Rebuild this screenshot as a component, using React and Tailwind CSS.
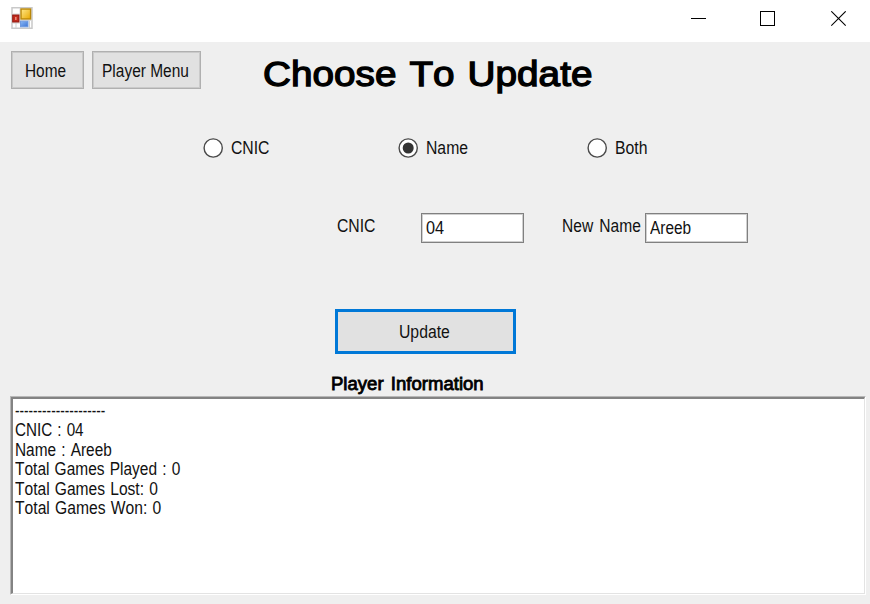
import React from 'react';

function Label({ className = '', children }) {
  return (
    <span className={`block origin-left whitespace-pre leading-5 ${className}`}>{children}</span>
  );
}

function FormIcon() {
  return (
    <svg width="22" height="22" viewBox="0 0 22 22" className="shrink-0">
      <defs>
        <linearGradient id="gold" x1="0" y1="0" x2="1" y2="1">
          <stop offset="0" stopColor="#ffe88a" />
          <stop offset="1" stopColor="#e9a800" />
        </linearGradient>
        <linearGradient id="blue" x1="0" y1="0" x2="1" y2="1">
          <stop offset="0" stopColor="#8ab8f5" />
          <stop offset="1" stopColor="#3c74d6" />
        </linearGradient>
      </defs>
      <rect x="1" y="0.75" width="20" height="20.5" fill="#fff" stroke="#c9c9c9" strokeWidth="1.5" />
      <path d="M1 16H9M5 16V21M18.5 14V21" stroke="#cfcfcf" fill="none" />
      <path d="M1 7H9M9 1V13.5H21" stroke="#d8d8d8" fill="none" />
      <rect x="1.7" y="8" width="6.3" height="7" fill="#c22a1c" stroke="#8f1a12" />
      <rect x="4" y="10" width="1.6" height="3" fill="#e88878" />
      <rect x="10" y="2" width="9.6" height="10" fill="url(#gold)" stroke="#b98708" strokeWidth="1.4" />
      <rect x="9.5" y="14.2" width="7.5" height="5.6" fill="url(#blue)" stroke="#6f9ae0" />
    </svg>
  );
}

function TitleBar() {
  return (
    <div className="flex h-[42px] shrink-0 bg-white pl-[11px]">
      <div className="pt-[7px]"><FormIcon /></div>
      <div className="ml-auto flex pr-[23px] pt-[11px]">
        <svg width="16" height="16" className="mr-[53px]" shapeRendering="crispEdges"><path d="M0 7.5H15" stroke="#000" /></svg>
        <svg width="16" height="16" className="mr-[55px]" shapeRendering="crispEdges"><rect x="0.5" y="0.5" width="14" height="14" fill="none" stroke="#000" /></svg>
        <svg width="16" height="16"><path d="M0.3 0.3L14.7 14.7M14.7 0.3L0.3 14.7" stroke="#000" strokeWidth="1.1" /></svg>
      </div>
    </div>
  );
}

function Radio({ checked, className, children }) {
  return (
    <div className={`flex items-center gap-2 ${className}`}>
      <svg width="20" height="20" viewBox="0 0 20 20" className="shrink-0">
        <circle cx="10.2" cy="10" r="9.1" fill="#fff" stroke="#4a4a4a" strokeWidth="1.4" />
        {checked && <circle cx="10.2" cy="10" r="5.5" fill="#333" />}
      </svg>
      <Label className="scale-x-[.9]">{children}</Label>
    </div>
  );
}

const info = [
  ['--------------------', 'scale-x-[.775]'],
  ['CNIC : 04', 'scale-x-[.87] [word-spacing:1px]'],
  ['Name : Areeb', 'scale-x-[.88] [word-spacing:1px]'],
  ['Total Games Played : 0', 'scale-x-[.885] [word-spacing:1px]'],
  ['Total Games Lost: 0', 'scale-x-[.89] [word-spacing:1px]'],
  ['Total Games Won: 0', 'scale-x-[.895] [word-spacing:1px]'],
];

export default function App() {
  return (
    <div className="flex h-[604px] w-[870px] flex-col overflow-hidden bg-[#efefef] font-['Liberation_Sans',Arial,sans-serif] text-[17.5px] text-[#111] [font-kerning:none]">
      <TitleBar />
      <div className="flex h-[95px] shrink-0 pl-[11px] pt-[9px]">
        <button className="h-[38px] w-[73px] border border-[#b0b0b0] bg-[#e1e1e1] pl-[13px] text-left shadow-[inset_0_0_0_1px_#cacaca]">
          <Label className="scale-x-[.88] pt-px">Home</Label>
        </button>
        <button className="ml-2 h-[38px] w-[109px] border border-[#b0b0b0] bg-[#e1e1e1] pl-[9px] text-left shadow-[inset_0_0_0_1px_#cacaca]">
          <Label className="w-[92px] scale-x-[.885] pt-px">Player Menu</Label>
        </button>
        <h1 className="ml-[62px] h-[46px] w-[340px] origin-left scale-x-[1.122] whitespace-nowrap text-[34.5px] font-normal leading-[46px] text-black [-webkit-text-stroke:1.3px_#000] [word-spacing:2px]">Choose To Update</h1>
      </div>
      <div className="flex h-[76px] shrink-0 pl-[203px]">
        <Radio className="h-[22px] w-[195px]">CNIC</Radio>
        <Radio className="h-[22px] w-[189px]" checked>Name</Radio>
        <Radio className="h-[22px]">Both</Radio>
      </div>
      <div className="flex h-[96px] shrink-0 pl-[337px]">
        <div className="w-[84px] pt-[3px]"><Label className="scale-x-[.9]">CNIC</Label></div>
        <div className="h-[30px] w-[103px] border border-[#808080] bg-white pl-1 pt-[4px] shadow-[inset_0_0_0_1px_#d0d0d0]">
          <Label className="scale-x-[.93]">04</Label>
        </div>
        <div className="ml-[38px] w-[83px] pt-[3px]"><Label className="scale-x-[.89] [word-spacing:2px]">New Name</Label></div>
        <div className="h-[30px] w-[103px] border border-[#808080] bg-white pl-[4px] pt-[4px] shadow-[inset_0_0_0_1px_#d0d0d0]">
          <Label className="scale-x-[.88]">Areeb</Label>
        </div>
      </div>
      <div className="flex h-[65px] shrink-0 pl-[335px]">
        <button className="h-[45px] w-[181px] border-[3px] border-[#0078d7] bg-[#e1e1e1] pl-[61px] text-left">
          <Label className="scale-x-[.9]">Update</Label>
        </button>
      </div>
      <div className="h-[22px] shrink-0 pl-[331px]">
        <Label className="scale-x-[1.06] text-black [-webkit-text-stroke:0.8px_#000] [word-spacing:2px]">Player Information</Label>
      </div>
      <div className="ml-[10px] h-[199px] w-[856px] shrink-0 border border-b-white border-l-[#b8b8b8] border-r-white border-t-[#b8b8b8]">
        <div className="h-full border-b border-l-2 border-r border-t-2 border-b-[#e3e3e3] border-l-[#838383] border-r-[#e3e3e3] border-t-[#838383] bg-white pl-[1.5px] pt-[1.5px]">
          {info.map(([text, scale]) => (
            <div key={text} className="h-[19.6px]"><Label className={scale}>{text}</Label></div>
          ))}
        </div>
      </div>
    </div>
  );
}
